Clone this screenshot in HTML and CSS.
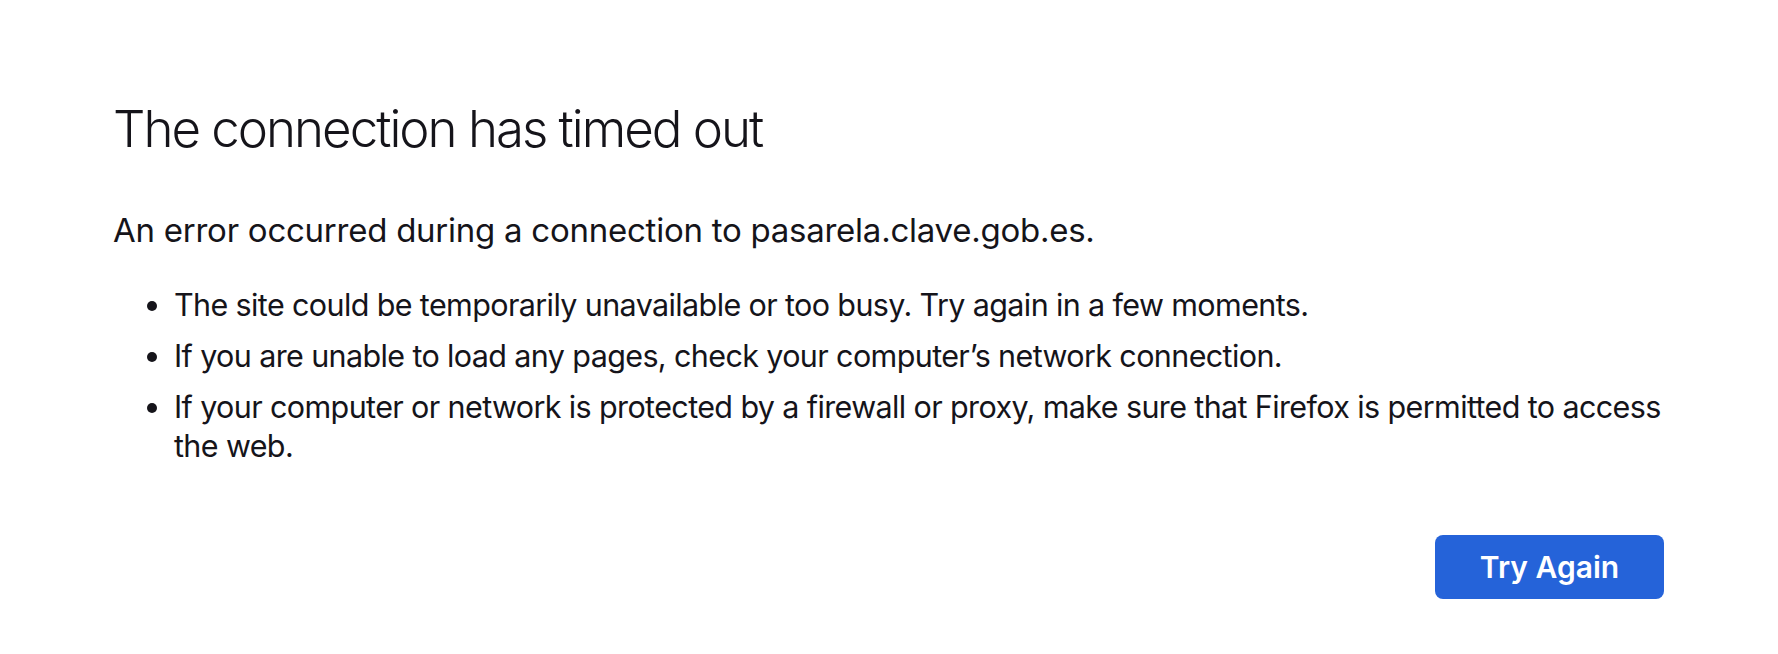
FILE: index.html
```html
<!DOCTYPE html>
<html lang="en">
<head>
<meta charset="utf-8">
<title>Problem loading page</title>
<link rel="stylesheet" href="styles.css">
</head>
<body>
<main class="container">
  <h1 class="title">The connection has timed out</h1>
  <p class="intro">An error occurred during a connection to pasarela.clave.gob.es.</p>
  <ul class="tips">
    <li>The site could be temporarily unavailable or too busy. Try again in a few moments.</li>
    <li>If you are unable to load any pages, check your computer’s network connection.</li>
    <li>If your computer or network is protected by a firewall or proxy, make sure that Firefox is permitted to access the web.</li>
  </ul>
  <div class="actions">
    <button class="primary" type="button">Try Again</button>
  </div>
</main>
</body>
</html>
```
FILE: styles.css
```css
html, body {
  margin: 0;
  padding: 0;
  background: #ffffff;
}
body {
  font-family: Inter, "Noto Sans", "Liberation Sans", sans-serif;
  color: #15141a;
}
.container {
  padding: 98px 114px 0 113px;
}
.title {
  margin: 0;
  font-size: 51px;
  line-height: 62px;
  font-weight: 300;
  letter-spacing: -2px;
}
.intro {
  margin: 50px 0 0;
  font-size: 33px;
  line-height: 40px;
  letter-spacing: -0.25px;
}
.tips {
  margin: 35px 0 0;
  padding-left: 61px;
  font-size: 30.5px;
  line-height: 39px;
  letter-spacing: -0.62px;
}
.tips li {
  margin-bottom: 12px;
}
.tips li:last-child {
  margin-bottom: 0;
}
.actions {
  display: flex;
  justify-content: flex-end;
  margin-top: 70px;
}
.primary {
  width: 229px;
  height: 64px;
  border: none;
  border-radius: 8px;
  background: #2563d9;
  color: #ffffff;
  font-family: Inter, "Noto Sans", "Liberation Sans", sans-serif;
  font-size: 30px;
  font-weight: 600;
  padding: 0;
}
```
